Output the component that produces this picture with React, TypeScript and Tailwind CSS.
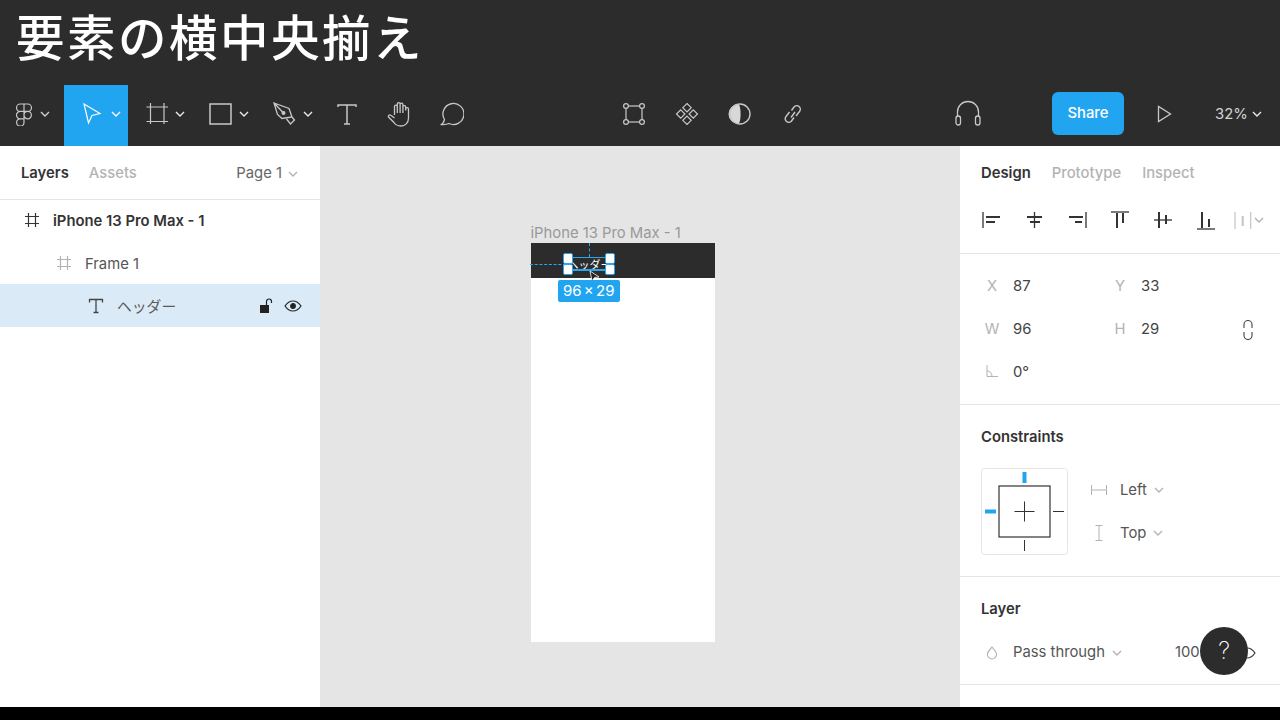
import { ReactNode } from "react";

const Chevron = ({ className = "text-[#d0d0d0]" }: { className?: string }) => (
  <svg width="10" height="6" viewBox="0 0 10 6" fill="none" stroke="currentColor" strokeWidth="1.4" className={`shrink-0 ${className}`}>
    <path d="M1 1l4 4 4-4" />
  </svg>
);

const Icon = ({ children, size = 24, className = "text-[#c8c8c8]" }: { children: ReactNode; size?: number; className?: string }) => (
  <svg width={size} height={size} viewBox={`0 0 ${size} ${size}`} fill="none" stroke="currentColor" strokeWidth="1.2" className={`shrink-0 ${className}`}>
    {children}
  </svg>
);

function ToolCell({ children, active }: { children: ReactNode; active?: boolean }) {
  return (
    <div className={`w-16 h-full flex items-center pl-[17px] pb-[3px] gap-[6px] ${active ? "bg-[#22a5f1]" : ""}`}>
      {children}
      <Chevron className={active ? "text-white" : "text-[#e8e8e8]"} />
    </div>
  );
}

function SingleTool({ children }: { children: ReactNode }) {
  return <div className="w-[53px] h-full flex items-center justify-center pb-[3px]">{children}</div>;
}

function FrameGlyph({ className }: { className: string }) {
  return (
    <svg width="16" height="16" viewBox="0 0 16 16" fill="none" stroke="currentColor" strokeWidth="1.2" className={className}>
      <path d="M4.500 1v14M11.500 1v14M1 4.500h14M1 11.500h14" />
    </svg>
  );
}

function Toolbar() {
  return (
    <div className="h-[61px] bg-[#2c2c2c] flex items-stretch shrink-0">
      <div className="w-16 h-full flex items-center pl-[12px] pb-[3px] gap-[4px]">
        <Icon>
          <path d="M12 2H8.200a3.700 3.700 0 000 7.400H12zM12 2h3.800a3.700 3.700 0 010 7.400H12zM12 9.400H8.200a3.700 3.700 0 000 7.400H12zM19.400 13.100a3.700 3.700 0 11-7.400 0 3.700 3.700 0 017.400 0zM8.200 16.800a3.700 3.700 0 103.800 3.700v-3.700z" />
        </Icon>
        <Chevron />
      </div>
      <ToolCell active>
        <Icon className="text-white">
          <path d="M3 2l16 9.500-8 2L7.500 21z" />
        </Icon>
      </ToolCell>
      <ToolCell>
        <Icon>
          <path d="M5.500 1v21M19 1v21M1.500 5h21.500M1.500 19.500h21.500" />
        </Icon>
      </ToolCell>
      <ToolCell>
        <Icon>
          <rect x="1" y="2" width="21" height="20" strokeWidth="1.500" />
        </Icon>
      </ToolCell>
      <ToolCell>
        <Icon>
          <path d="M1 1l15 5.500L19 15 9 16.500l-4.500-4zM1 1l9.500 10M19 15l2.500 3-4 4-4-5" strokeWidth="1.300" />
          <circle cx="10.500" cy="11" r="1.400" fill="currentColor" />
        </Icon>
      </ToolCell>
      <SingleTool>
        <Icon>
          <path d="M3 5V3h18v2M12 3v19M9 22h6" strokeWidth="1.500" />
        </Icon>
      </SingleTool>
      <SingleTool>
        <Icon size={28}>
          <path d="M8.500 15V6.500a1.400 1.400 0 012.800 0V13M11.300 13V4a1.400 1.400 0 012.800 0v9M14.100 13V4.500a1.400 1.400 0 012.800 0V13M16.900 13V7a1.400 1.400 0 012.800 0v3.500M19.700 9a1.400 1.400 0 012.800 0v9c0 5-3.500 8-7.500 8-3.500 0-5.500-1.200-7-3.500L2.500 17c-.7-1.200 1-2.700 2.300-1.700L8.500 18" strokeWidth="1.300" />
        </Icon>
      </SingleTool>
      <SingleTool>
        <Icon className="text-[#c8c8c8] -ml-[2px]">
          <path d="M1.500 22.500c1.500-1 2.500-2.500 3-5A10.500 10.500 0 1 1 9 21.500c-2 .8-5 1.200-7.500 1z" strokeWidth="1.300" />
        </Icon>
      </SingleTool>
      <div className="w-[128px]" />
      <SingleTool>
        <Icon>
          <rect x="4" y="4" width="16" height="16" />
          <circle cx="4" cy="4" r="2.400" fill="#2c2c2c" />
          <circle cx="20" cy="4" r="2.400" fill="#2c2c2c" />
          <circle cx="4" cy="20" r="2.400" fill="#2c2c2c" />
          <circle cx="20" cy="20" r="2.400" fill="#2c2c2c" />
        </Icon>
      </SingleTool>
      <SingleTool>
        <Icon>
          <path d="M12 1.500l4.200 4.200-4.200 4.200-4.200-4.200zM12 14.100l4.200 4.200-4.200 4.200-4.200-4.200zM5.700 7.800L9.900 12l-4.200 4.200L1.500 12zM18.300 7.800l4.200 4.200-4.200 4.200-4.200-4.200z" />
        </Icon>
      </SingleTool>
      <SingleTool>
        <Icon>
          <path d="M10.500 2a10 10 0 000 20c2.800-2.500 2.800-17.500 0-20z" fill="#d8d8d8" stroke="none" />
          <circle cx="12" cy="12" r="10" strokeWidth="1.400" />
        </Icon>
      </SingleTool>
      <SingleTool>
        <Icon>
          <path d="M10.500 8.500L13 5a3.500 3.500 0 015.500 4.500L15 14M14 10l-4 5.500M13 15.500L10.500 19a3.500 3.500 0 01-5.500-4.500L8.500 10" strokeWidth="1.400" />
        </Icon>
      </SingleTool>
      <div className="w-[122px]" />
      <div className="w-[53px] flex items-center justify-center pb-[3px]">
        <Icon size={28}>
          <path d="M3.500 19v-7a10.500 10.500 0 0121 0v7" strokeWidth="1.300" />
          <rect x="2" y="16" width="4.500" height="9" rx="2.200" fill="#2c2c2c" strokeWidth="1.300" />
          <rect x="21.500" y="16" width="4.500" height="9" rx="2.200" fill="#2c2c2c" strokeWidth="1.300" />
        </Icon>
      </div>
      <div className="ml-[58px] w-[72px] h-[43px] self-start mt-[7px] rounded-md bg-[#22a5f1] flex items-center justify-center text-white text-[14.800px] font-medium">
        Share
      </div>
      <div className="w-[80px] flex items-center justify-center pb-[3px]">
        <Icon>
          <path d="M6.500 4.500v15l12-7.500z" strokeWidth="1.300" />
        </Icon>
      </div>
      <div className="flex items-center gap-[7px] ml-[11px] pb-[3px] text-[14.800px] text-[#d4d4d4]">
        <span>32%</span>
        <Chevron className="text-[#e8e8e8] -ml-[3px]" />
      </div>
    </div>
  );
}

function LayerRow({ indent, icon, label, className = "", children }: { indent: string; icon: ReactNode; label: string; className?: string; children?: ReactNode }) {
  return (
    <div className={`h-[42.670px] flex items-center text-[14.800px] ${indent} ${className}`}>
      {icon}
      {label === "ヘッダー" ? (
        <span className="ml-[13px] text-[#5a5a5a] font-['Noto_Sans_CJK_JP',sans-serif]">{label}</span>
      ) : (
        <span className="ml-[13px] pt-[2px]">{label}</span>
      )}
      {children}
    </div>
  );
}

function LeftPanel() {
  return (
    <aside className="w-80 bg-white shrink-0">
      <div className="h-[54px] border-b-[1.500px] border-[#e5e5e5] flex items-center pl-[21px] pr-[22px] pt-[2px] text-[14.800px]">
        <span className="font-semibold text-[#333333]">Layers</span>
        <span className="ml-[20px] font-medium text-[#b3b3b3]">Assets</span>
        <span className="ml-auto text-[#666666]">Page 1</span>
        <Chevron className="ml-[6px] text-[#b3b3b3]" />
      </div>
      <LayerRow indent="pl-[24px]" icon={<FrameGlyph className="text-[#333333]" />} label="iPhone 13 Pro Max - 1" className="font-semibold text-[#333333] -mt-[1px]" />
      <LayerRow indent="pl-[56px]" icon={<FrameGlyph className="text-[#b3b3b3]" />} label="Frame 1" className="text-[#555555]" />
      <LayerRow
        indent="pl-[88px]"
        className="bg-[#daebf7]"
        icon={
          <svg width="16" height="16" viewBox="0 0 16 16" fill="none" stroke="#444444" strokeWidth="1.300">
            <path d="M1.500 4.500V1.500h13v3M8 1.500v13M5.500 14.500h5" />
          </svg>
        }
        label="ヘッダー"
      >
        <div className="ml-auto mr-[18px] flex items-center gap-[9px]">
          <svg width="16" height="16" viewBox="0 0 16 16" fill="none">
            <rect x="1" y="7" width="9" height="8" fill="#222222" />
            <path d="M7.500 7V3.500a2.500 2.500 0 015 0V5" stroke="#222222" strokeWidth="1.200" />
          </svg>
          <svg width="18" height="12" viewBox="0 0 18 12" fill="none" stroke="#222222" strokeWidth="1.200">
            <path d="M1 6c2-3 5-5 8-5s6 2 8 5c-2 3-5 5-8 5s-6-2-8-5z" />
            <circle cx="9" cy="6" r="2.300" fill="#222222" />
          </svg>
        </div>
      </LayerRow>
    </aside>
  );
}

function Canvas() {
  return (
    <main className="flex-1 relative bg-[#e5e5e5] overflow-hidden">
      <div className="absolute left-[210.500px] top-[76px] text-[14.800px] text-[#999999]">iPhone 13 Pro Max - 1</div>
      <div className="absolute left-[210.500px] top-[97px] w-[184.500px] h-[399px] bg-white">
        <div className="h-[35px] bg-[#2c2c2c]" />
      </div>
      {/* selection overlay on the header text */}
      <div className="absolute left-[210px] top-[118px] w-[36px] border-t border-dashed border-[#2ba5f0]" />
      <div className="absolute left-[268.500px] top-[97px] h-[14px] border-l border-dashed border-[#2ba5f0]" />
      <div className="absolute left-[248px] top-[111px] w-[43px] h-[14px] border border-[#2ba5f0] flex items-center justify-center whitespace-nowrap text-[11px] leading-none text-white font-['Noto_Sans_CJK_JP',sans-serif]">
        ヘッダー
      </div>
      <div className="absolute left-[250px] top-[123px] w-[40px] border-t border-[#2ba5f0]" />
      <div className="absolute left-[243px] top-[107px] w-[10px] h-[11px] rounded-[2px] bg-white border border-[#2ba5f0]" />
      <div className="absolute left-[284.500px] top-[107px] w-[10px] h-[11px] rounded-[2px] bg-white border border-[#2ba5f0]" />
      <div className="absolute left-[243px] top-[118px] w-[10px] h-[11px] rounded-[2px] bg-white border border-[#2ba5f0]" />
      <div className="absolute left-[284.500px] top-[118px] w-[10px] h-[11px] rounded-[2px] bg-white border border-[#2ba5f0]" />
      <svg width="12" height="13" viewBox="0 0 12 13" className="absolute left-[268.500px] top-[124px]">
        <path d="M1 1l2 10 2.500-3.500L10 7z" fill="#222222" stroke="#ffffff" strokeWidth="0.800" />
      </svg>
      <div className="absolute left-[237.500px] top-[134px] w-[62.500px] h-[22px] rounded-[2px] bg-[#22a5f1] text-white text-[15px] [word-spacing:-2px] flex items-center justify-center">
        96 × 29
      </div>
    </main>
  );
}

function Field({ label, value }: { label: string; value: string }) {
  return (
    <div className="flex items-center h-[43px] w-[128px] shrink-0 text-[14.800px]">
      <span className="w-[22px] mr-[10px] text-center text-[#b3b3b3]">{label}</span>
      <span className="text-[#444444]">{value}</span>
    </div>
  );
}

const alignIcons = [
  { line: "M4 4v16", bars: "M7 9h14M7 14h9" },
  { line: "M12.500 4v16", bars: "M5 9h15M8 14h10" },
  { line: "M21 4v16", bars: "M4 9h14M10 14h7" },
  { line: "M3 4h18", bars: "M9 5v15M15 5v10" },
  { line: "M3 12h18", bars: "M8 4v16M15 7v9" },
  { line: "M3 21h18", bars: "M8 4v16M15 11v8" },
];

function AlignIcons() {
  return (
    <div className="h-[56px] flex items-center pl-[19px] pb-[12px] gap-[19px] border-b-[1.500px] border-[#e5e5e5]">
      {alignIcons.map((icon, i) => (
        <svg key={i} width="24" height="24" viewBox="0 0 24 24" fill="none" stroke="#333333" className="shrink-0">
          <path d={icon.line} strokeWidth="1.300" />
          <path d={icon.bars} strokeWidth="2" />
        </svg>
      ))}
      <div className="flex items-center -ml-[5px] gap-[2px]">
        <svg width="20" height="24" viewBox="0 0 20 24" fill="none" stroke="#c4c4c4" className="shrink-0">
          <path d="M3 4v17M18.700 4v17" strokeWidth="1.200" />
          <path d="M10.700 8v10" strokeWidth="2" />
        </svg>
        <Chevron className="text-[#b3b3b3]" />
      </div>
    </div>
  );
}

function ConstraintBox() {
  return (
    <svg width="87" height="87" viewBox="0 0 87 87" fill="none" className="shrink-0">
      <rect x="0.500" y="0.500" width="86" height="86" rx="3" stroke="#e5e5e5" />
      <rect x="18" y="18" width="51" height="51" stroke="#333333" strokeWidth="1.200" />
      <path d="M33.500 43.500h20M43.500 33.500v20" stroke="#333333" />
      <path d="M72 43.500h11M43.500 72v11" stroke="#333333" />
      <path d="M43.500 4v11M4 43.500h11" stroke="#22a5f1" strokeWidth="4" />
    </svg>
  );
}

function RightPanel() {
  return (
    <aside className="w-80 bg-white shrink-0 flex flex-col">
      <div className="h-[52px] flex items-center pl-[21px] pt-[2px] gap-[21px] text-[14.800px]">
        <span className="font-semibold text-[#333333]">Design</span>
        <span className="font-medium text-[#b3b3b3]">Prototype</span>
        <span className="font-medium text-[#b3b3b3]">Inspect</span>
      </div>
      <AlignIcons />
      <div className="h-[151px] pl-[21px] pt-[11px] border-b-[1.500px] border-[#e5e5e5] relative">
        <div className="flex">
          <Field label="X" value="87" />
          <Field label="Y" value="33" />
        </div>
        <div className="flex items-center">
          <Field label="W" value="96" />
          <Field label="H" value="29" />
          <svg width="10" height="20" viewBox="0 0 10 20" fill="none" stroke="#444444" strokeWidth="1.100" className="ml-[6px] shrink-0">
            <path d="M1 8V4.500a4 4 0 018 0V8M1 12v3.500a4 4 0 008 0V12" />
          </svg>
        </div>
        <div className="flex items-center">
          <Field label="" value="0°" />
        </div>
        <svg width="12" height="12" viewBox="0 0 12 12" fill="none" stroke="#b3b3b3" className="absolute left-[26px] top-[111px]">
          <path d="M1 0v11.500h11M1 6c3 0 5 2 5 5.500" />
        </svg>
      </div>
      <div className="h-[172px] pl-[21px] border-b-[1.500px] border-[#e5e5e5]">
        <div className="h-[63px] pt-[1px] flex items-center text-[14.800px] font-semibold text-[#333333]">Constraints</div>
        <div className="flex">
          <ConstraintBox />
          <div className="ml-[23px] text-[14.800px] text-[#555555]">
            <div className="h-[43px] pt-[1px] flex items-center">
              <svg width="16" height="10" viewBox="0 0 16 10" fill="none" stroke="#b3b3b3">
                <path d="M.5 0v10M15.500 0v10M1 5h14" />
              </svg>
              <span className="ml-[13px]">Left</span>
              <Chevron className="ml-[7px] text-[#b3b3b3]" />
            </div>
            <div className="h-[43px] pt-[1px] flex items-center">
              <svg width="16" height="16" viewBox="0 0 16 16" fill="none" stroke="#b3b3b3">
                <path d="M4.500.5h7M4.500 15.500h7M8 1v14" />
              </svg>
              <span className="ml-[13px]">Top</span>
              <Chevron className="ml-[7px] text-[#b3b3b3]" />
            </div>
          </div>
        </div>
      </div>
      <div className="h-[108px] pl-[21px] border-b-[1.500px] border-[#e5e5e5]">
        <div className="h-[63px] pt-[1px] flex items-center text-[14.800px] font-semibold text-[#333333]">Layer</div>
        <div className="h-[23px] pt-[2px] flex items-center text-[14.800px] text-[#555555]">
          <svg width="14" height="16" viewBox="0 0 14 16" fill="none" stroke="#b3b3b3" strokeWidth="1.200" className="ml-[4px] shrink-0">
            <path d="M7 2l3.500 4.500a4.500 4.500 0 11-7 0z" />
          </svg>
          <span className="ml-[14px]">Pass through</span>
          <Chevron className="ml-[7px] text-[#b3b3b3]" />
          <span className="ml-[53px]">100</span>
          <svg width="18" height="12" viewBox="0 0 18 12" fill="none" stroke="#333333" strokeWidth="1.200" className="ml-[38px] shrink-0">
            <path d="M1 6c2-3 5-5 8-5s6 2 8 5c-2 3-5 5-8 5s-6-2-8-5z" />
          </svg>
        </div>
      </div>
    </aside>
  );
}

export default function App() {
  return (
    <div className="w-[1280px] h-[720px] relative overflow-hidden flex flex-col bg-black font-['Inter',sans-serif]">
      <div className="h-[85px] bg-[#2c2c2c] shrink-0 pl-[16px] flex items-start">
        <h1 className="text-[48.500px] leading-[70px] tracking-[2.500px] text-white font-['Noto_Sans_CJK_JP',sans-serif] font-medium whitespace-nowrap">
          要素の横中央揃え
        </h1>
      </div>
      <Toolbar />
      <div className="h-[561px] flex shrink-0 overflow-hidden">
        <LeftPanel />
        <Canvas />
        <RightPanel />
      </div>
      <div className="absolute left-[1200px] top-[627px] w-12 h-12 rounded-full bg-[#2c2c2c] flex items-center justify-center text-white text-2xl font-extralight">
        ?
      </div>
    </div>
  );
}
